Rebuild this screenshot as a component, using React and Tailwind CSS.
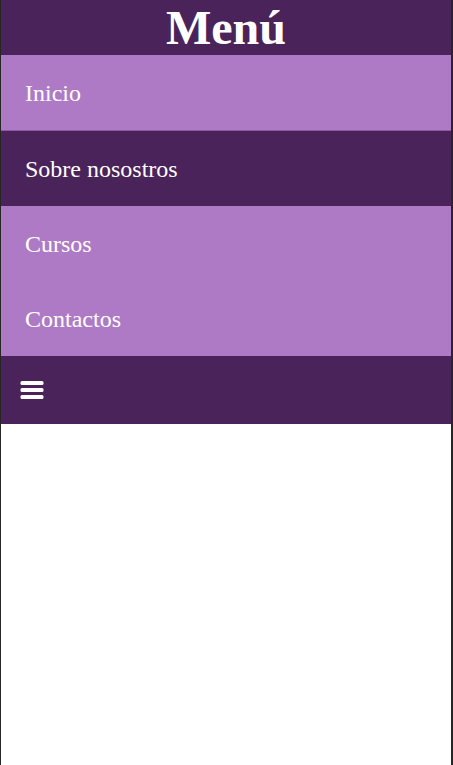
const items = [
    { label: 'Inicio', bg: 'h-[76px] bg-[#af7ac5] border-b border-[#8e5aa3]' },
    { label: 'Sobre nosostros', bg: 'h-[75px] bg-[#4a235a]' },
    { label: 'Cursos', bg: 'h-[75px] bg-[#af7ac5]' },
    { label: 'Contactos', bg: 'h-[75px] bg-[#af7ac5]' },
];

const App = () => {
    return (
        <div className="min-h-screen bg-white border-l border-r-2 border-[#262626]"
            style={{ fontFamily: "'Liberation Serif', 'Times New Roman', serif" }}>
            <header className="h-[55px] bg-[#4a235a] flex items-center justify-center">
                <h1 className="text-[48px] font-bold text-white leading-none">Menú</h1>
            </header>

            <nav className="flex flex-col">
                {items.map(it => (
                    <a key={it.label} href="#" className={"flex items-center pl-[24px] text-[24px] text-white " + it.bg}>
                        {it.label}
                    </a>
                ))}
            </nav>

            <div className="h-[68px] bg-[#4a235a] flex items-center pl-[19px]">
                <svg width="24" height="19" viewBox="0 0 24 19">
                    <rect x="0.5" y="0" width="23" height="4" rx="1.5" fill="#fff" />
                    <rect x="0.5" y="7" width="23" height="4" rx="1.5" fill="#fff" />
                    <rect x="0.5" y="14" width="23" height="4" rx="1.5" fill="#fff" />
                </svg>
            </div>
        </div>
    );
};

export default App;
